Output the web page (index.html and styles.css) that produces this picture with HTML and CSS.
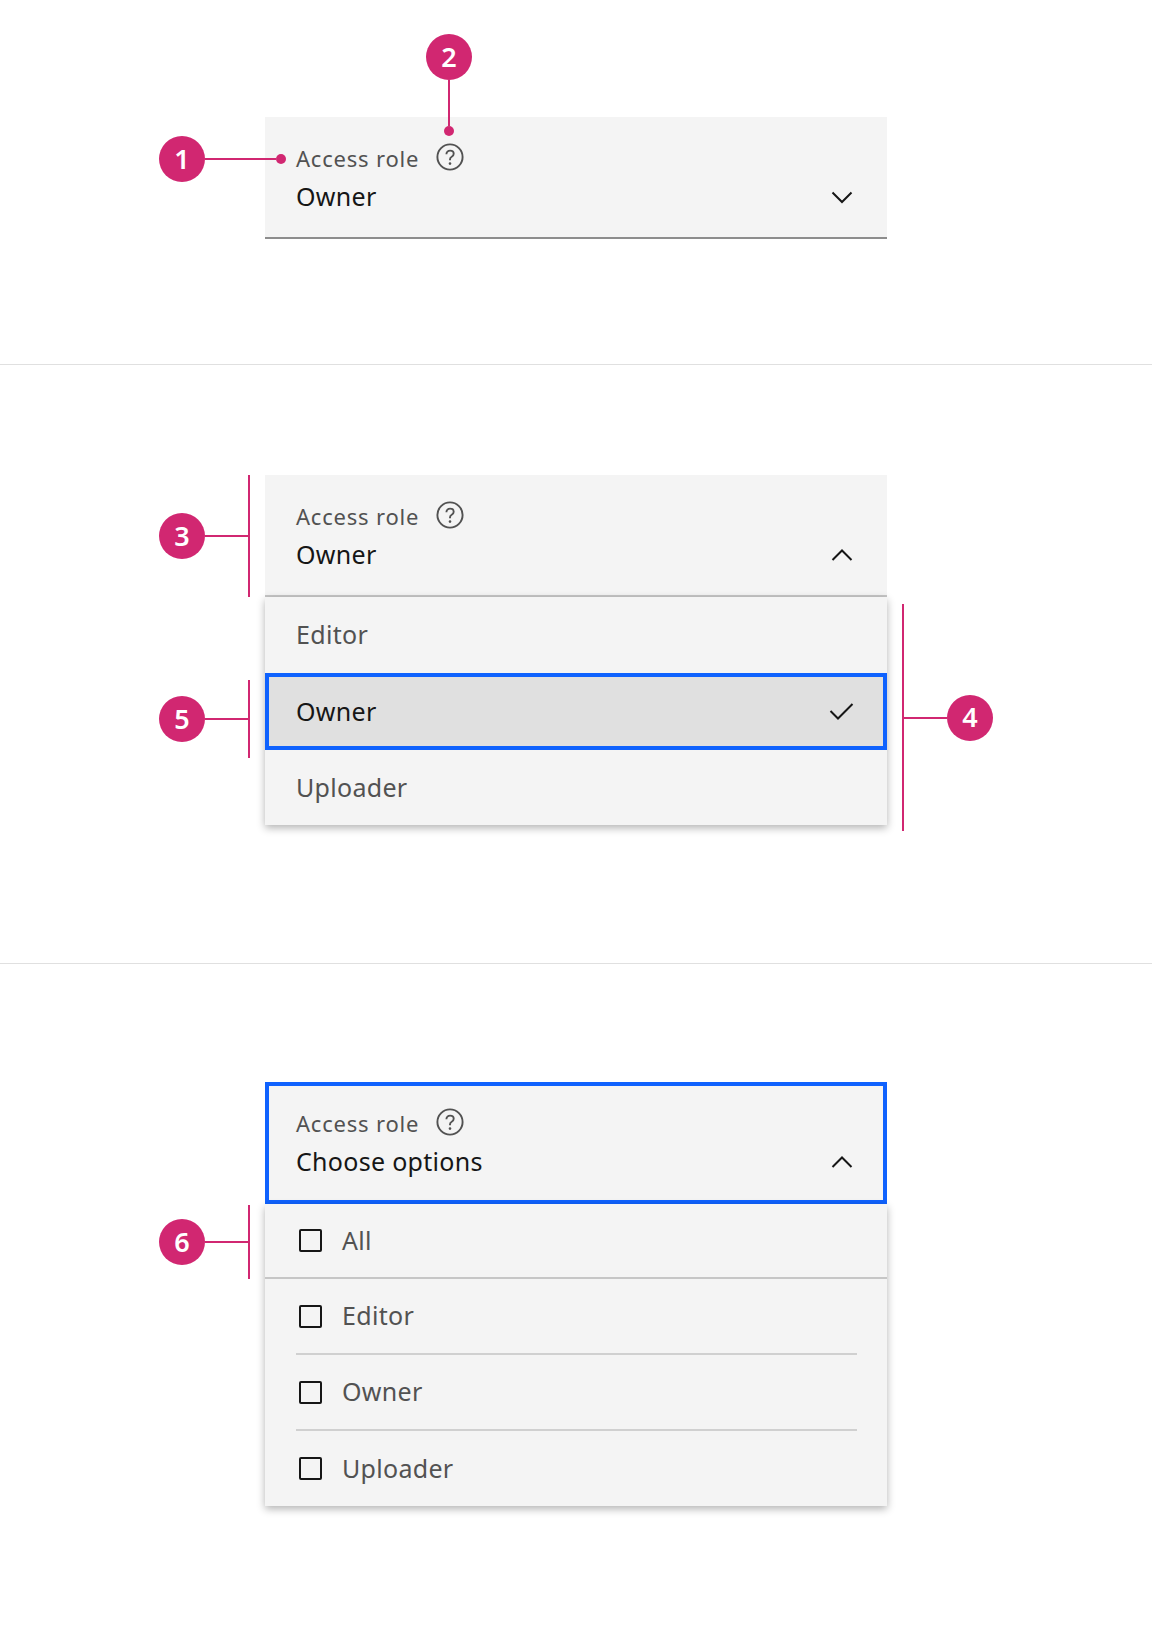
FILE: index.html
```html
<!DOCTYPE html>
<html lang="en">
<head>
<meta charset="utf-8">
<title>Dropdown anatomy</title>
<link rel="stylesheet" href="styles.css">
</head>
<body>
<section class="section section-one">
  <div class="field field-closed">
    <div class="label-row"><span class="label">Access role</span>
      <svg class="help" viewBox="0 0 28 28"><circle cx="14" cy="14" r="12.6"/><path d="M10.4 11.2c0-2.2 1.6-3.6 3.7-3.6s3.6 1.3 3.6 3.2c0 1.5-.8 2.3-2 3-1.2.7-1.7 1.3-1.7 2.7v.8"/><circle class="help-dot" cx="14" cy="20.6" r="1.3"/></svg>
    </div>
    <div class="value-row"><span class="value">Owner</span>
      <svg class="caret" viewBox="0 0 24 14"><path d="M2.5 2.5l9.5 9.5 9.5-9.5"/></svg>
    </div>
  </div>
  <div class="callout callout-1"><span class="badge">1</span><span class="leader"></span><span class="dot"></span></div>
  <div class="callout callout-2"><span class="badge">2</span><span class="leader-v"></span><span class="dot"></span></div>
</section>

<section class="section section-two">
  <div class="field field-open">
    <div class="label-row"><span class="label">Access role</span>
      <svg class="help" viewBox="0 0 28 28"><circle cx="14" cy="14" r="12.6"/><path d="M10.4 11.2c0-2.2 1.6-3.6 3.7-3.6s3.6 1.3 3.6 3.2c0 1.5-.8 2.3-2 3-1.2.7-1.7 1.3-1.7 2.7v.8"/><circle class="help-dot" cx="14" cy="20.6" r="1.3"/></svg>
    </div>
    <div class="value-row"><span class="value">Owner</span>
      <svg class="caret" viewBox="0 0 24 14"><path d="M2.5 12l9.5-9.5 9.5 9.5"/></svg>
    </div>
  </div>
  <ul class="menu">
    <li class="option">Editor</li>
    <li class="option option-selected"><span>Owner</span>
      <svg class="check" viewBox="0 0 26 18"><path d="M1.5 9l7.5 7.5L23.5 2"/></svg>
    </li>
    <li class="option option-last">Uploader</li>
  </ul>
  <div class="callout callout-3"><span class="badge">3</span><span class="leader"></span><span class="bracket"></span></div>
  <div class="callout callout-5"><span class="badge">5</span><span class="leader"></span><span class="bracket"></span></div>
  <div class="callout callout-4"><span class="bracket"></span><span class="leader"></span><span class="badge">4</span></div>
</section>

<section class="section section-three">
  <div class="field field-focus">
    <div class="label-row"><span class="label">Access role</span>
      <svg class="help" viewBox="0 0 28 28"><circle cx="14" cy="14" r="12.6"/><path d="M10.4 11.2c0-2.2 1.6-3.6 3.7-3.6s3.6 1.3 3.6 3.2c0 1.5-.8 2.3-2 3-1.2.7-1.7 1.3-1.7 2.7v.8"/><circle class="help-dot" cx="14" cy="20.6" r="1.3"/></svg>
    </div>
    <div class="value-row"><span class="value">Choose options</span>
      <svg class="caret" viewBox="0 0 24 14"><path d="M2.5 12l9.5-9.5 9.5 9.5"/></svg>
    </div>
  </div>
  <ul class="menu">
    <li class="check-option check-all"><span class="box"></span><span class="check-text">All</span></li>
    <li class="check-option"><span class="check-inner"><span class="box"></span><span class="check-text">Editor</span></span></li>
    <li class="check-option"><span class="check-inner"><span class="box"></span><span class="check-text">Owner</span></span></li>
    <li class="check-option check-final"><span class="check-inner check-last"><span class="box"></span><span class="check-text">Uploader</span></span></li>
  </ul>
  <div class="callout callout-6"><span class="badge">6</span><span class="leader"></span><span class="bracket"></span></div>
</section>
</body>
</html>
```
FILE: styles.css
```css
* { box-sizing: border-box; }
html, body { margin: 0; padding: 0; background: #fff; }
body {
  width: 1152px;
  height: 1631px;
  overflow: hidden;
  font-family: "Noto Sans", "Open Sans", sans-serif;
  color: #161616;
}
.section { position: relative; padding-left: 265px; }
.section-one { height: 365px; padding-top: 117px; border-bottom: 1px solid #e0e0e0; }
.section-two { height: 599px; padding-top: 110px; border-bottom: 1px solid #e0e0e0; }
.section-three { padding-top: 118px; }

.field {
  width: 622px;
  height: 122px;
  padding: 27px 31px 0 31px;
  background: #f4f4f4;
}
.field-closed { border-bottom: 2px solid #8d8d8d; }
.field-open { border-bottom: 2px solid #c6c6c6; }
.field-focus { border: 4px solid #0f62fe; padding: 23px 27px 0 27px; }

.label-row { display: flex; align-items: center; height: 28px; gap: 17px; }
.label { font-size: 22px; line-height: 28px; letter-spacing: 0.8px; color: #525252; }
.help { width: 28px; height: 28px; margin-top: -2px; fill: none; stroke: #525252; stroke-width: 1.9; }
.help-dot { fill: #525252; stroke: none; }

.value-row { display: flex; align-items: center; justify-content: space-between; height: 36px; margin-top: 6px; }
.value { font-size: 25px; line-height: 36px; letter-spacing: 0.3px; color: #161616; }
.caret { width: 24px; height: 14px; margin: 2px 2px 0 0; fill: none; stroke: #161616; stroke-width: 2; }

.menu {
  list-style: none;
  margin: 0;
  padding: 0;
  width: 622px;
  background: #f4f4f4;
  box-shadow: 0 3px 8px rgba(0, 0, 0, 0.3);
}
.option {
  display: flex;
  align-items: center;
  justify-content: space-between;
  height: 76px;
  padding: 0 31px 2px;
  font-size: 25px;
  letter-spacing: 0.3px;
  color: #525252;
}
.option-selected {
  height: 77px;
  padding: 0 27px 2px;
  background: #e0e0e0;
  border: 4px solid #0f62fe;
  color: #161616;
}
.option-last { height: 75px; }
.check { width: 26px; height: 18px; margin-right: 1px; fill: none; stroke: #161616; stroke-width: 2; }

.check-option { height: 76px; font-size: 25px; letter-spacing: 0.3px; color: #525252; }
.check-inner {
  display: flex;
  align-items: center;
  gap: 20px;
  height: 76px;
  margin: 0 30px 0 31px;
  border-bottom: 2px solid #d0d0d0;
}
.check-last { height: 75px; border-bottom: 0; }
.check-final { height: 75px; }
.check-all {
  display: flex;
  align-items: center;
  gap: 20px;
  height: 75px;
  padding: 0 30px 0 31px;
  border-bottom: 2px solid #c6c6c6;
}
.box { flex: none; width: 23px; height: 23px; margin-left: 3px; border: 2px solid #161616; border-radius: 2px; }
.check-text { margin-bottom: 2px; }

.callout { position: absolute; display: flex; align-items: center; }
.badge {
  display: flex;
  align-items: center;
  justify-content: center;
  flex: none;
  width: 46px;
  height: 46px;
  padding-bottom: 2px;
  border-radius: 50%;
  background: #d12771;
  color: #fff;
  font-size: 27px;
  font-weight: 600;
}
.leader { flex: 1; height: 2px; background: #d12771; }
.leader-v { width: 2px; height: 46px; background: #d12771; }
.bracket { flex: none; width: 2px; background: #d12771; }
.dot { flex: none; width: 10px; height: 10px; border-radius: 50%; background: #d12771; }

.callout-1 { left: 159px; top: 136px; width: 127px; }
.callout-2 { left: 426px; top: 34px; flex-direction: column; }
.callout-3 { left: 159px; top: 110px; width: 91px; }
.callout-3 .bracket { height: 122px; }
.callout-5 { left: 159px; top: 315px; width: 91px; }
.callout-5 .bracket { height: 78px; }
.callout-4 { left: 902px; top: 239px; width: 91px; }
.callout-4 .bracket { height: 227px; }
.callout-6 { left: 159px; top: 241px; width: 91px; }
.callout-6 .bracket { height: 74px; }
```
